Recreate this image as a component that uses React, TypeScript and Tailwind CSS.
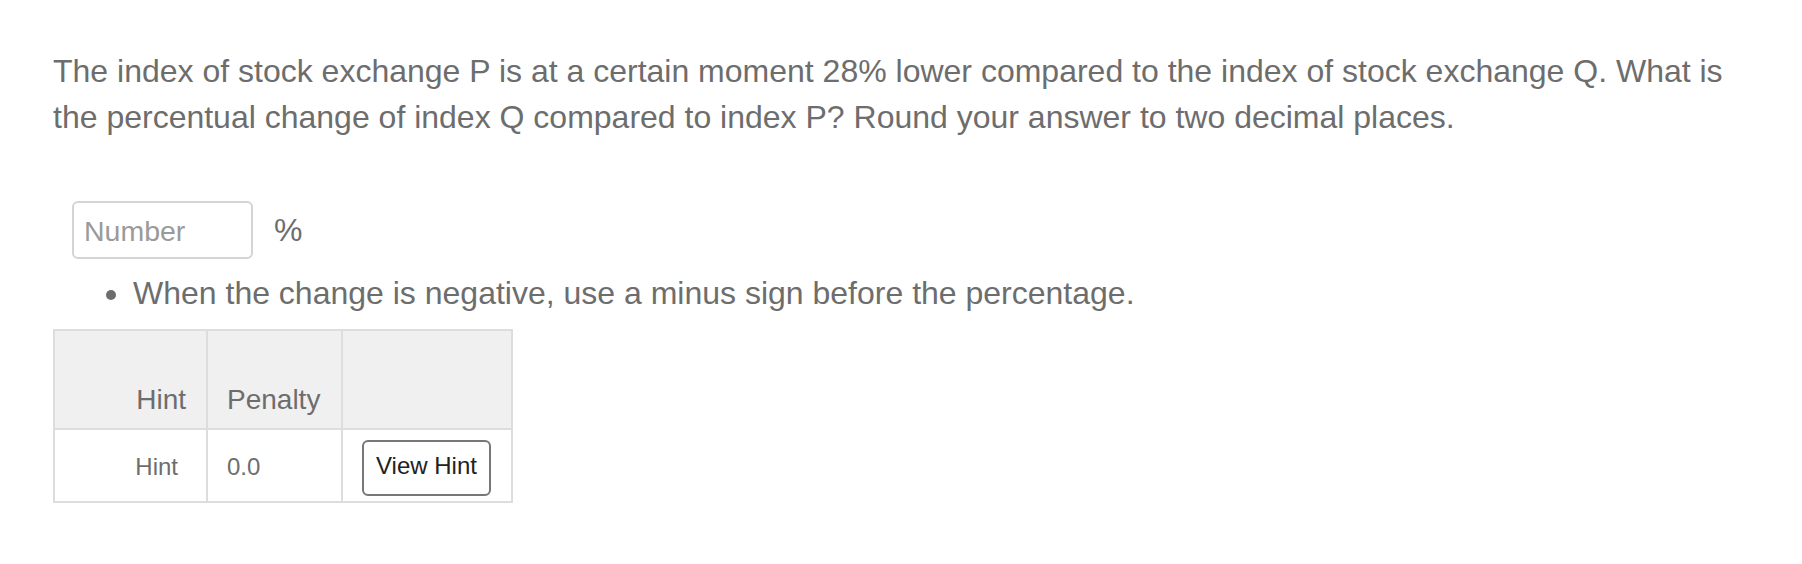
import React from "react";

export default function App() {
  const font = { fontFamily: '"Liberation Sans", Arial, Helvetica, sans-serif' };
  return (
    <div className="w-[1802px] h-[564px] bg-white text-[#6d6d6d] pl-[53px] pr-[48px] pt-[48px]" style={font}>
      <p className="text-[32px] leading-[46px]">
        The index of stock exchange P is at a certain moment 28% lower compared to the index of stock exchange Q. What is the percentual change of index Q compared to index P? Round your answer to two decimal places.
      </p>
      <div className="mt-[61px] ml-[19px] flex items-center gap-[21px]">
        <input
          type="text"
          placeholder="Number"
          className="w-[181px] h-[58px] border-2 border-[#d4d4d4] rounded-[6px] pl-[10px] pt-[3px] text-[28.5px] placeholder:text-[#9a9a9a] outline-none"
          style={font}
        />
        <span className="text-[32px] leading-[46px]">%</span>
      </div>
      <ul className="mt-[11px]">
        <li className="flex items-center text-[32px] leading-[46px]">
          <span className="ml-[53px] w-[10px] h-[10px] rounded-full bg-[#6d6d6d] mt-[4px]" />
          <span className="ml-[17px]">When the change is negative, use a minus sign before the percentage.</span>
        </li>
      </ul>
      <div className="mt-[13px] w-[460px] border-2 border-[#dddddd]">
        <div className="flex h-[99px] bg-[#f0f0f0] border-b-2 border-[#dddddd]">
          <div className="w-[153px] border-r-2 border-[#dddddd] flex items-end justify-end pr-[20px] pb-[8px] text-[28px] leading-[40px]">Hint</div>
          <div className="w-[135px] border-r-2 border-[#dddddd] flex items-end pl-[19px] pb-[8px] text-[28px] leading-[40px]">Penalty</div>
          <div className="flex-1" />
        </div>
        <div className="flex h-[71px]">
          <div className="w-[153px] border-r-2 border-[#dddddd] flex items-center justify-end pr-[28px] text-[24px] pt-[2px]">Hint</div>
          <div className="w-[135px] border-r-2 border-[#dddddd] flex items-center pl-[19px] text-[24px] pt-[2px]">0.0</div>
          <div className="flex-1 pl-[19px] pt-[10px]">
            <button
              className="w-[129px] h-[56px] border-2 border-[#777777] rounded-[6px] bg-white text-[#222222] text-[24px] pb-[4px]"
              style={font}
            >
              View Hint
            </button>
          </div>
        </div>
      </div>
    </div>
  );
}
